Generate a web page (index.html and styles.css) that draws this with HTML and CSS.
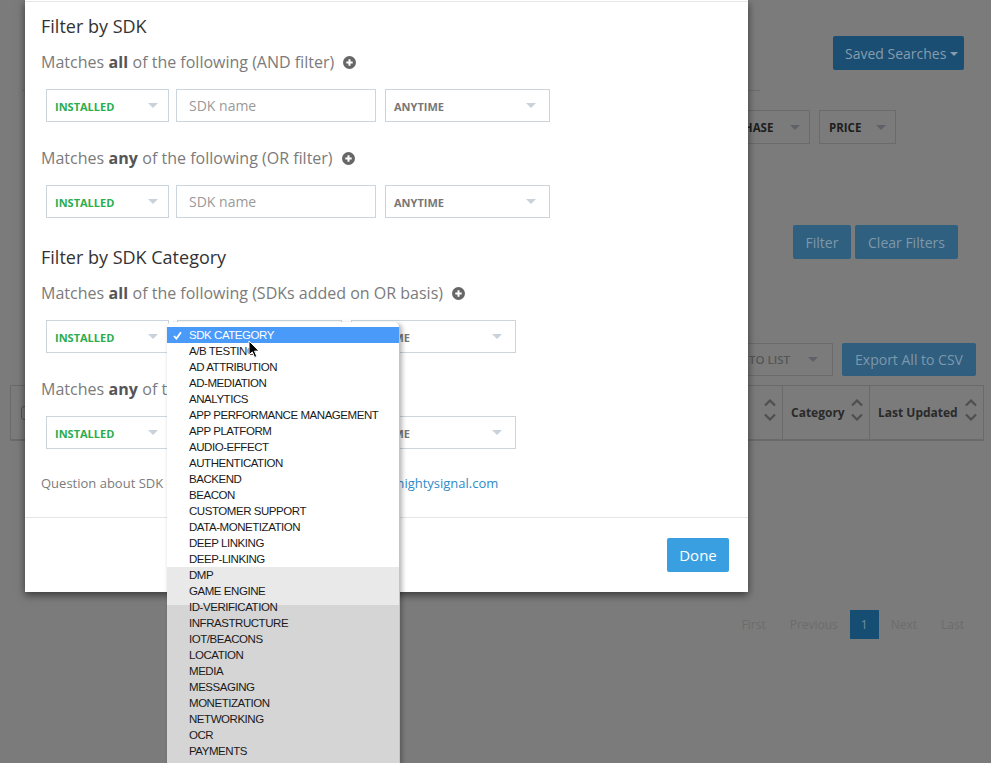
FILE: index.html
```html
<!DOCTYPE html>
<html>
<head>
<meta charset="utf-8">
<title>Filter by SDK</title>
<link rel="stylesheet" href="styles.css">
</head>
<body>
<div class="page">
  <div class="row-top">
    <button class="bg-btn btn-saved">Saved Searches <span class="caret"></span></button>
  </div>
  <div class="rule"></div>
  <div class="row-filters">
    <div class="bg-select w-base"><span>PURCHASE</span><i class="bg-tri"></i></div>
    <div class="bg-select w-price"><span>PRICE</span><i class="bg-tri"></i></div>
  </div>
  <div class="row-actions">
    <button class="bg-btn btn-muted btn-filter">Filter</button>
    <button class="bg-btn btn-muted btn-clear">Clear Filters</button>
  </div>
  <div class="row-export">
    <div class="bg-select w-list"><span>ADD TO LIST</span><i class="bg-tri"></i></div>
    <button class="bg-btn btn-export">Export All to CSV</button>
  </div>
  <div class="table-head">
    <div class="th th-check"><span class="chk"></span></div>
    <div class="th"><span>App</span><svg class="sort" width="12" height="22" viewBox="0 0 12 22"><path d="M1 6.5 L6 1.5 L11 6.5 M1 15.5 L6 20.5 L11 15.5"/></svg></div>
    <div class="th"><span>Publisher</span><svg class="sort" width="12" height="22" viewBox="0 0 12 22"><path d="M1 6.5 L6 1.5 L11 6.5 M1 15.5 L6 20.5 L11 15.5"/></svg></div>
    <div class="th"><span>Ratings</span><svg class="sort" width="12" height="22" viewBox="0 0 12 22"><path d="M1 6.5 L6 1.5 L11 6.5 M1 15.5 L6 20.5 L11 15.5"/></svg></div>
    <div class="th"><span>Category</span><svg class="sort" width="12" height="22" viewBox="0 0 12 22"><path d="M1 6.5 L6 1.5 L11 6.5 M1 15.5 L6 20.5 L11 15.5"/></svg></div>
    <div class="th"><span>Last Updated</span><svg class="sort" width="12" height="22" viewBox="0 0 12 22"><path d="M1 6.5 L6 1.5 L11 6.5 M1 15.5 L6 20.5 L11 15.5"/></svg></div>
  </div>
  <div class="pager">
    <span class="pg">First</span>
    <span class="pg">Previous</span>
    <span class="pg pg-active">1</span>
    <span class="pg">Next</span>
    <span class="pg">Last</span>
  </div>
</div>

<div class="modal">
  <div class="modal-body">
    <h4 class="sec-title">Filter by SDK</h4>
    <p class="match">Matches <b>all</b> of the following (AND filter) <svg class="plus" width="13" height="13" viewBox="0 0 13 13"><circle cx="6.5" cy="6.5" r="6.5"/><path d="M6.5 3.3 V9.7 M3.3 6.5 H9.7"/></svg></p>
    <div class="cond-row">
      <div class="sel sel-status"><span class="installed">INSTALLED</span><i class="tri"></i></div>
      <input class="sdk-input" type="text" placeholder="SDK name">
      <div class="sel sel-time"><span class="anytime">ANYTIME</span><i class="tri"></i></div>
    </div>
    <p class="match match-gap">Matches <b>any</b> of the following (OR filter) <svg class="plus" width="13" height="13" viewBox="0 0 13 13"><circle cx="6.5" cy="6.5" r="6.5"/><path d="M6.5 3.3 V9.7 M3.3 6.5 H9.7"/></svg></p>
    <div class="cond-row">
      <div class="sel sel-status"><span class="installed">INSTALLED</span><i class="tri"></i></div>
      <input class="sdk-input" type="text" placeholder="SDK name">
      <div class="sel sel-time"><span class="anytime">ANYTIME</span><i class="tri"></i></div>
    </div>

    <h4 class="sec-title sec-gap">Filter by SDK Category</h4>
    <p class="match">Matches <b>all</b> of the following (SDKs added on OR basis) <svg class="plus" width="13" height="13" viewBox="0 0 13 13"><circle cx="6.5" cy="6.5" r="6.5"/><path d="M6.5 3.3 V9.7 M3.3 6.5 H9.7"/></svg></p>
    <div class="cond-row">
      <div class="sel sel-status sel-status-cat"><span class="installed">INSTALLED</span><i class="tri"></i></div>
      <div class="sel sel-cat"><span class="anytime">SDK CATEGORY</span><i class="tri"></i></div>
      <div class="sel sel-time"><span class="anytime">ANYTIME</span><i class="tri"></i></div>
    </div>
    <p class="match match-gap">Matches <b>any</b> of the following (OR filter) <svg class="plus" width="13" height="13" viewBox="0 0 13 13"><circle cx="6.5" cy="6.5" r="6.5"/><path d="M6.5 3.3 V9.7 M3.3 6.5 H9.7"/></svg></p>
    <div class="cond-row">
      <div class="sel sel-status sel-status-cat"><span class="installed">INSTALLED</span><i class="tri"></i></div>
      <div class="sel sel-cat"><span class="anytime">SDK CATEGORY</span><i class="tri"></i></div>
      <div class="sel sel-time"><span class="anytime">ANYTIME</span><i class="tri"></i></div>
    </div>
    <p class="question">Question about SDK categories? Just email us at <a href="#">support@mightysignal.com</a></p>
  </div>
  <div class="modal-footer">
    <button class="btn-done">Done</button>
  </div>
</div>

<ul class="menu">
  <li class="item item-on"><svg class="check" width="9" height="9" viewBox="0 0 9 9"><path d="M1 5 L3.4 7.6 L8 1.2"/></svg>SDK CATEGORY</li>
  <li class="item">A/B TESTING</li>
  <li class="item">AD ATTRIBUTION</li>
  <li class="item">AD-MEDIATION</li>
  <li class="item">ANALYTICS</li>
  <li class="item">APP PERFORMANCE MANAGEMENT</li>
  <li class="item">APP PLATFORM</li>
  <li class="item">AUDIO-EFFECT</li>
  <li class="item">AUTHENTICATION</li>
  <li class="item">BACKEND</li>
  <li class="item">BEACON</li>
  <li class="item">CUSTOMER SUPPORT</li>
  <li class="item">DATA-MONETIZATION</li>
  <li class="item">DEEP LINKING</li>
  <li class="item">DEEP-LINKING</li>
  <li class="item">DMP</li>
  <li class="item">GAME ENGINE</li>
  <li class="item">ID-VERIFICATION</li>
  <li class="item">INFRASTRUCTURE</li>
  <li class="item">IOT/BEACONS</li>
  <li class="item">LOCATION</li>
  <li class="item">MEDIA</li>
  <li class="item">MESSAGING</li>
  <li class="item">MONETIZATION</li>
  <li class="item">NETWORKING</li>
  <li class="item">OCR</li>
  <li class="item">PAYMENTS</li>
</ul>

<svg class="cursor" width="12" height="19" viewBox="0 0 12 19"><path d="M1 1 L1 15 L4.3 11.9 L6.6 17.4 L8.8 16.5 L6.5 11.1 L11 11.1 Z"/></svg>
</body>
</html>
```

FILE: styles.css
```css
html, body {
  margin: 0;
  padding: 0;
  height: 100%;
  overflow: hidden;
}
body {
  background: #7b7b7b;
  font-family: "Open Sans", "Liberation Sans", sans-serif;
  position: relative;
}

/* ---------- dimmed page behind the modal ---------- */
.page {
  display: flex;
  flex-direction: column;
}
.row-top {
  display: flex;
  justify-content: flex-end;
  margin-top: 36px;
  padding-right: 27px;
}
.bg-btn {
  border: 0;
  border-radius: 2px;
  font-family: "Open Sans", sans-serif;
  font-size: 14px;
  height: 34px;
  padding: 0;
}
.btn-saved {
  width: 131px;
  padding-left: 6px;
  background: #1a4e72;
  color: #879dae;
}
.caret {
  display: inline-block;
  vertical-align: middle;
  border-left: 4px solid transparent;
  border-right: 4px solid transparent;
  border-top: 4px solid #879dae;
  margin-left: 0;
  margin-top: -2px;
}
.rule {
  margin: 20px 0 0 22px;
  width: 738px;
  height: 1px;
  background: #6d6d6d;
}
.row-filters {
  display: flex;
  justify-content: flex-end;
  gap: 9px;
  margin-top: 19px;
  padding-right: 95px;
}
.bg-select {
  box-sizing: border-box;
  height: 34px;
  border: 1px solid #6b6b6b;
  display: flex;
  align-items: center;
  justify-content: space-between;
  padding: 0 9px 0 9px;
  font-size: 11.5px;
  font-weight: 700;
  color: #1e1e1e;
}
.bg-tri {
  display: block;
  border-left: 5.5px solid transparent;
  border-right: 5.5px solid transparent;
  border-top: 5px solid #5e6266;
}
.w-base { width: 107px; }
.w-price { width: 77px; }
.row-actions {
  display: flex;
  justify-content: flex-end;
  gap: 4px;
  margin-top: 81px;
  padding-right: 33px;
}
.btn-muted {
  background: #30607f;
  color: #7d98ab;
}
.btn-filter { width: 58px; }
.btn-clear { width: 103px; }
.row-export {
  display: flex;
  justify-content: flex-end;
  gap: 9px;
  margin-top: 84px;
  padding-right: 15px;
}
.w-list {
  width: 150px;
  height: 33px;
  justify-content: flex-end;
  gap: 18px;
  padding-right: 14px;
  font-weight: 600;
  color: #555;
}
.btn-export {
  width: 134px;
  height: 33px;
  background: #2f5e7e;
  color: #7d98ab;
}
.table-head {
  margin: 9px 0 0 10px;
  width: 974px;
  height: 56px;
  box-sizing: border-box;
  border-top: 1px solid #6a6a6a;
  border-bottom: 2px solid #6a6a6a;
  border-left: 1px solid #6a6a6a;
  display: grid;
  grid-template-columns: 90px 1fr 150px 130px 87px 114px;
}
.th {
  border-right: 1px solid #6a6a6a;
  display: flex;
  align-items: center;
  justify-content: space-between;
  padding: 0 6px 0 8px;
  font-size: 12px;
  font-weight: 700;
  color: #2a2a2a;
}
.th-check {
  justify-content: flex-start;
  padding-left: 10px;
}
.chk {
  width: 12px;
  height: 12px;
  border: 1px solid #555;
  border-radius: 3px;
}
.sort {
  fill: none;
  stroke: #4f4f4f;
  stroke-width: 2.2;
  margin-top: -6px;
}
.pager {
  display: flex;
  justify-content: flex-end;
  margin-top: 169px;
  padding-right: 15px;
}
.pg {
  height: 29px;
  line-height: 29px;
  padding: 0 12px;
  font-size: 12px;
  color: #6c6c6c;
}
.pg-active {
  padding: 0 11px;
  background: #164d72;
  color: #6f8fa6;
}

/* ---------- modal ---------- */
.modal {
  position: absolute;
  left: 25px;
  top: 0;
  width: 723px;
  padding-top: 1px;
  background: #fff;
  box-shadow: 0 3px 8px rgba(0, 0, 0, 0.55);
}
.modal-body {
  border-top: 1px solid #e6e6e6;
  padding: 12px 16px 25px 16px;
}
.sec-title {
  margin: 0;
  font-size: 18px;
  font-weight: 400;
  line-height: 24px;
  color: #333;
}
.sec-gap { margin-top: 27px; }
.match {
  margin: 13px 0 0 0;
  font-size: 16px;
  line-height: 22px;
  color: #7b7b7b;
  display: flex;
  align-items: center;
}
.match b {
  color: #555;
  font-weight: 700;
  margin: 0 4.5px;
}
.match-gap { margin-top: 25px; }
.plus {
  margin-left: 9px;
  margin-top: 1px;
}
.plus circle { fill: #666; }
.plus path {
  stroke: #fff;
  stroke-width: 2;
}
.cond-row {
  display: flex;
  margin: 16px 0 0 5px;
  height: 33px;
}
.sel {
  box-sizing: border-box;
  height: 33px;
  border: 1px solid #cbd5dd;
  display: flex;
  align-items: center;
  justify-content: space-between;
  padding: 1px 13px 0 8px;
  font-size: 11px;
  font-weight: 700;
}
.sel-status {
  width: 123px;
  padding-right: 10px;
  margin-right: 7px;
}
.sel-status-cat { margin-right: 8px; }
.sel-cat {
  width: 165px;
  margin-right: 9px;
}
.sel-time { width: 165px; }
.installed { color: #29ad4f; }
.anytime { color: #777; }
.tri {
  display: block;
  margin-top: -2px;
  border-left: 5.5px solid transparent;
  border-right: 5.5px solid transparent;
  border-top: 5.5px solid #c9d2da;
}
.sdk-input {
  box-sizing: border-box;
  width: 200px;
  height: 33px;
  margin: 0 9px 0 0;
  border: 1px solid #cbd5dd;
  padding: 0 0 0 12px;
  font-family: "Open Sans", sans-serif;
  font-size: 14px;
  color: #555;
  outline: none;
}
.sdk-input::placeholder { color: #9a9a9a; }
.question {
  margin: 25px 0 0 0;
  font-size: 13px;
  line-height: 18px;
  color: #7b7b7b;
}
.question a {
  color: #2e8bc9;
  text-decoration: none;
}
.modal-footer {
  border-top: 1px solid #e5e5e5;
  display: flex;
  justify-content: flex-end;
  padding: 20px 19px 20px 0;
}
.btn-done {
  width: 62px;
  height: 34px;
  border: 0;
  border-radius: 2px;
  background: #3a9fe1;
  color: #fff;
  font-family: "Open Sans", sans-serif;
  font-size: 15px;
  padding: 0;
}

/* ---------- native select popup ---------- */
.menu {
  position: absolute;
  left: 167px;
  top: 322px;
  width: 233px;
  height: 441px;
  margin: 0;
  padding: 5px 0 0 0;
  list-style: none;
  box-sizing: border-box;
  overflow: hidden;
  border-radius: 5px 5px 0 0;
  border-right: 1px solid #c4c4c4;
  background: linear-gradient(#fff 0, #fff 245px, #e9e9e9 245px, #e9e9e9 283px, #d5d5d5 283px);
  box-shadow: 2px 2px 5px rgba(0, 0, 0, 0.3);
}
.item {
  position: relative;
  height: 16px;
  line-height: 16px;
  padding-left: 22px;
  font-family: "Liberation Sans", Arial, sans-serif;
  font-size: 11.5px;
  letter-spacing: -0.45px;
  color: #1a1a1a;
  white-space: nowrap;
}
.item-on {
  background: #4a9af9;
  color: #fff;
}
.check {
  position: absolute;
  left: 6px;
  top: 4px;
  fill: none;
  stroke: #fff;
  stroke-width: 1.8;
}
.cursor {
  position: absolute;
  left: 248px;
  top: 340px;
}
.cursor path {
  fill: #000;
  stroke: #fff;
  stroke-width: 1;
}
```
